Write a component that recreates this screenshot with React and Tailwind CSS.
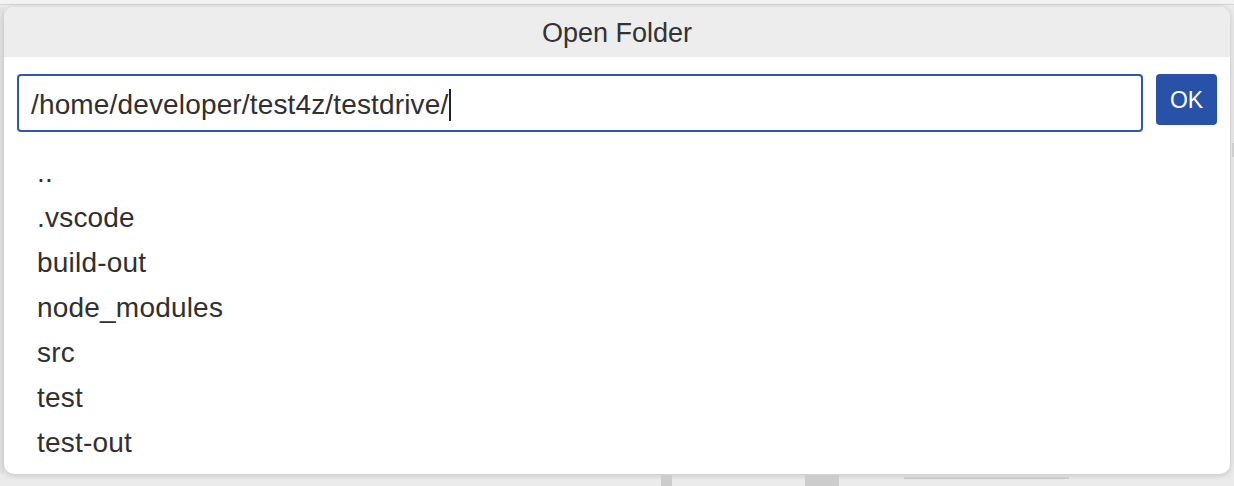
export default function App() {
  const items = ["..", ".vscode", "build-out", "node_modules", "src", "test", "test-out"];
  return (
    <div className="w-[1234px] h-[486px] bg-[#ebebeb] overflow-hidden flex flex-col font-['Liberation_Sans',Arial,sans-serif]">
      <div className="h-[5px] bg-[#f3f3f3] border-b border-[#d4d4d4] shrink-0" />
      <div className="flex flex-row mt-[2px] shrink-0">
        <div className="w-[4px] bg-[#e3e3e3]" />
        <div className="w-[1226px] h-[467px] bg-white rounded-[10px] shadow-[0_1px_6px_rgba(0,0,0,0.18)] flex flex-col overflow-hidden">
          <div className="h-[50px] bg-[#ededed] flex items-center justify-center pt-[3px] shrink-0">
            <span className="text-[27px] text-[#333333] leading-none">Open Folder</span>
          </div>
          <div className="flex flex-row items-start gap-[13px] px-[13px] pt-[17px]">
            <div className="w-[1126px] h-[58px] border-2 border-[#2d58ae] rounded-[4px] flex items-center pl-[12px] pt-[3px]">
              <span className="text-[28px] tracking-[0.15px] text-[#303030] leading-none">/home/developer/test4z/testdrive/</span>
              <span className="inline-block w-[2px] h-[32px] bg-[#222222] ml-[1px]" />
            </div>
            <div className="w-[61px] h-[51px] bg-[#2852a8] rounded-[4px] flex items-center justify-center text-white text-[23px] pt-[1px]">
              OK
            </div>
          </div>
          <div className="flex flex-col mt-[18px] pl-[33px]">
            {items.map((it) => (
              <div key={it} className="h-[45px] leading-[45px] text-[28px] tracking-[0.2px] text-[#303030]">
                {it}
              </div>
            ))}
          </div>
        </div>
        <div className="w-[4px] flex flex-col">
          <div className="h-[136px]" />
          <div className="h-[14px] ml-[2px] w-[2px] bg-[#cfcfcf]" />
        </div>
      </div>
      <div className="flex flex-row h-[12px] mt-[1px]">
        <div className="w-[661px]" />
        <div className="w-[11px] h-full bg-[#cccccc]" />
        <div className="w-[133px]" />
        <div className="w-[34px] h-full bg-[#cccccc]" />
        <div className="w-[65px]" />
        <div className="w-[165px] h-[2px] mt-[2px] bg-[#cbcbcb]" />
      </div>
    </div>
  );
}
